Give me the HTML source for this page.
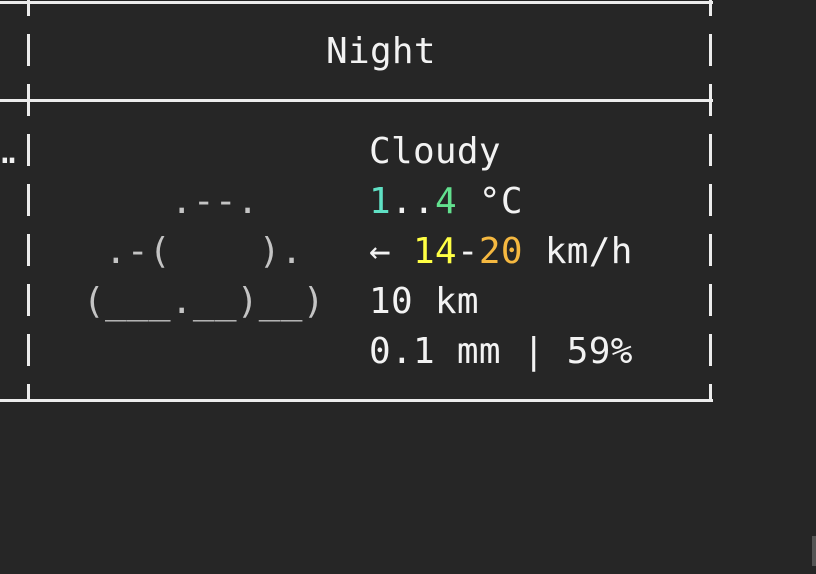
<!DOCTYPE html>
<html><head><meta charset="utf-8"><style>
html,body{margin:0;padding:0;}
body{width:816px;height:574px;background:#262626;position:relative;overflow:hidden;font-family:"DejaVu Sans Mono","Liberation Mono",monospace;font-size:36px;letter-spacing:0.3px;color:#f2f2f2;}
.t{position:absolute;line-height:50px;white-space:pre;height:50px;}
.h{position:absolute;left:0;width:713px;height:3px;background:#ececec;}
.v{position:absolute;width:3px;top:0;height:402px;background:repeating-linear-gradient(to bottom,#ececec 0,#ececec 16px,transparent 16px,transparent 34px,#ececec 34px,#ececec 50px);}
.g{color:#c4c4c4}
</style></head><body>
<div class="h" style="top:1px"></div>
<div class="h" style="top:99px"></div>
<div class="h" style="top:399px"></div>
<div class="v" style="left:27px"></div>
<div class="v" style="left:709px"></div>
<div class="t" style="left:326px;top:27px">Night</div>
<div class="t" style="left:-6px;top:127px">…</div>
<div class="t g" style="left:61px;top:177px">     .--.</div>
<div class="t g" style="left:61px;top:227px">  .-(    ).</div>
<div class="t g" style="left:61px;top:277px"> (___.__)__)</div>
<div class="t" style="left:369px;top:127px">Cloudy</div>
<div class="t" style="left:369px;top:177px"><span style="color:#5fe0c4">1</span>..<span style="color:#62e08e">4</span> °C</div>
<div class="t" style="left:369px;top:227px">← <span style="color:#ffff44">14</span>-<span style="color:#f5b840">20</span> km/h</div>
<div class="t" style="left:369px;top:277px">10 km</div>
<div class="t" style="left:369px;top:327px">0.1 mm | 59%</div>
<div style="position:absolute;left:812px;top:536px;width:4px;height:30px;background:#555"></div>
</body></html>
